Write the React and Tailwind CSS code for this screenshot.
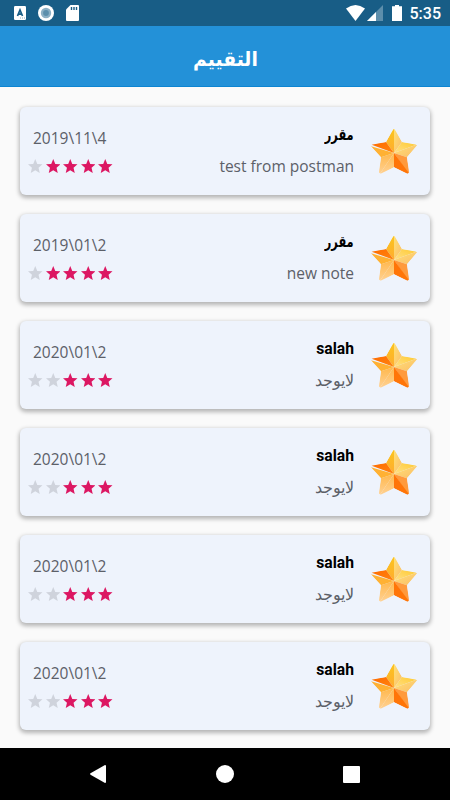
const reviews = [
  { name: 'مقرر', note: 'test from postman', date: '2019\\11\\4', rating: 4 },
  { name: 'مقرر', note: 'new note', date: '2019\\01\\2', rating: 4 },
  { name: 'salah', note: 'لايوجد', date: '2020\\01\\2', rating: 3 },
  { name: 'salah', note: 'لايوجد', date: '2020\\01\\2', rating: 3 },
  { name: 'salah', note: 'لايوجد', date: '2020\\01\\2', rating: 3 },
  { name: 'salah', note: 'لايوجد', date: '2020\\01\\2', rating: 3 },
];

const isArabic = (text) => /[\u0600-\u06ff]/.test(text);

function StatusBar() {
  return (
    <div className="flex h-[26px] shrink-0 items-center bg-[#185d86] pr-[9px] pl-[14px] text-white">
      <svg className="h-[14px] w-3" viewBox="0 0 12 14">
        <rect width="12" height="14" rx="1.2" fill="#fff" />
        <path d="M3.5 10 6 4l2.5 6M4.3 8.2h3.4" fill="none" stroke="#185d86" strokeWidth="1.7" />
        <path d="M6 12h1M8 12h1M10 12h1" stroke="#8cacc0" />
      </svg>
      <svg className="ml-3 size-4" viewBox="0 0 16 16">
        <circle cx="8" cy="8" r="8" fill="#fff" />
        <circle cx="8" cy="8" r="5.2" fill="#8cb0c5" />
        <circle cx="8" cy="8" r="2.9" fill="#5c8fac" />
      </svg>
      <svg className="ml-3 h-4 w-[13px]" viewBox="0 0 13 16">
        <path d="M4.5 0H12a1 1 0 0 1 1 1v14a1 1 0 0 1-1 1H1a1 1 0 0 1-1-1V4.5z" fill="#fff" />
        <path d="M5.5 2v3M8 2v3M10.5 2v3" stroke="#185d86" strokeWidth="1.4" />
      </svg>
      <svg className="ml-auto h-4 w-[19px]" viewBox="0 0 19 16">
        <path d="M0 3.6Q9.5-3.4 19 3.6L9.5 16z" fill="#fff" />
      </svg>
      <svg className="ml-[2px] h-4 w-4" viewBox="0 0 16 16">
        <path d="M16 0v16H0z" fill="#5d8eab" />
        <path d="M9 7v9H0z" fill="#fff" />
      </svg>
      <svg className="ml-[9px] h-4 w-[10px]" viewBox="0 0 10 16">
        <path d="M3 0h4v1.3h3V16H0V1.3h3z" fill="#fff" />
      </svg>
      <span className="ml-2 pt-[2px] font-['Roboto',sans-serif] text-[16px] leading-none font-medium">5:35</span>
    </div>
  );
}

function GoldStar() {
  return (
    <svg className="size-12 shrink-0" viewBox="0 0 48 48">
      <defs>
        <linearGradient id="crest" x1="0" y1="0" x2="0" y2="1">
          <stop stopColor="#fbc51d" />
          <stop offset="1" stopColor="#ffac30" />
        </linearGradient>
        <linearGradient id="pale" x1="0" y1="0" x2="1" y2="1">
          <stop stopColor="#ffe078" />
          <stop offset="1" stopColor="#fbbd66" />
        </linearGradient>
        <linearGradient id="side" x1="1" y1="0" x2="0" y2="1">
          <stop stopColor="#ffc92c" />
          <stop offset="1" stopColor="#ffe08a" />
        </linearGradient>
        <linearGradient id="orange" x1="0" y1="0" x2="1" y2="1">
          <stop stopColor="#ff6a00" />
          <stop offset="1" stopColor="#ff8510" />
        </linearGradient>
        <linearGradient id="foot" x1="0" y1="0" x2="0" y2="1">
          <stop stopColor="#ffb74b" />
          <stop offset="1" stopColor="#ffd49a" />
        </linearGradient>
        <clipPath id="outline">
          <path d="M22.5 2Q24 0 25.5 2L32 14 45.2 16.4Q48 17 46.2 19L37 29.2 39.3 43Q39 46.3 36.5 45.2L24 39.2 11.5 45.2Q9 46.3 8.7 43L11 29.2 1.8 19Q0 17 2.8 16.4L16 14Z" />
        </clipPath>
      </defs>
      <g clipPath="url(#outline)">
        <path d="M24 0 16 14 24 25z" fill="url(#crest)" />
        <path d="M24 0 32 14 24 25z" fill="url(#pale)" />
        <path d="M48 16 32 14 24 25z" fill="url(#side)" />
        <path d="M48 16 37 29.2 24 25z" fill="url(#pale)" />
        <path d="M39.5 48 37 29.2 24 25z" fill="#ff9a3c" />
        <path d="M41 48 24 39.2V25z" fill="#ff7508" />
        <path d="M8.5 48 24 39.2V25z" fill="url(#foot)" />
        <path d="M8.5 48 11 29.2 24 25z" fill="url(#foot)" />
        <path d="M0 16 16 14 24 25z" fill="url(#orange)" />
        <path d="M0 18 11 29.2 24 25z" fill="#ffb133" />
      </g>
    </svg>
  );
}

function Rating({ value }) {
  return (
    <div className="flex flex-row-reverse justify-end gap-[3px]">
      {[0, 1, 2, 3, 4].map((i) => (
        <svg key={i} className={i < value ? 'h-[14px] w-[14.5px] text-[#dc1762]' : 'h-[14px] w-[14.5px] text-[#cfd3dc]'} viewBox="2 2 20 19" fill="currentColor" preserveAspectRatio="none">
          <path d="M12 17.27 18.18 21l-1.64-7.03L22 9.24l-7.19-.61L12 2 9.19 8.63 2 9.24l5.46 4.73L5.82 21z" />
        </svg>
      ))}
    </div>
  );
}

function ReviewCard({ review }) {
  return (
    <article className="flex h-[88px] shrink-0 rounded-[6px] bg-[#eef3fc] pr-[12px] pl-[8px] shadow-[0_2px_4px_1px_rgba(0,0,0,0.28)]">
      <div className="flex flex-col pt-[19px]">
        <time className="ml-[5px] h-6 font-['Open_Sans',sans-serif] text-[15.5px] leading-6 font-normal text-[#5c6068]">{review.date}</time>
        <div className="mt-[9px]">
          <Rating value={review.rating} />
        </div>
      </div>
      <div className="ml-auto flex flex-col items-end pt-[16px]">
        <h2 dir="auto" className={isArabic(review.name)
          ? "h-6 origin-right scale-x-[0.71] font-['DejaVu_Sans',sans-serif] text-[16px] leading-6 font-extrabold text-black"
          : "h-6 font-['Roboto',sans-serif] text-[15.7px] leading-6 font-bold text-black"}>
          {review.name}
        </h2>
        <p dir="auto" className={isArabic(review.note)
          ? "mt-[8px] h-6 font-['DejaVu_Sans',sans-serif] text-[15.5px] leading-6 font-extralight text-[#5c6068]"
          : "mt-[7.5px] h-6 font-['Open_Sans',sans-serif] text-[15.5px] leading-6 font-normal text-[#5c6068]"}>
          {review.note}
        </p>
      </div>
      <div className="ml-4 pt-[21px]">
        <GoldStar />
      </div>
    </article>
  );
}

function NavBar() {
  return (
    <nav className="flex h-[52px] shrink-0 items-center justify-between bg-black pr-[90px] pl-[90px]">
      <svg className="h-[18px] w-4" viewBox="0 0 16 18" fill="#fff">
        <path d="M15 0q1 0 1 1v16q0 1-1 1L.5 9.7Q-.3 9 .5 8.3z" />
      </svg>
      <div className="size-[18px] rounded-full bg-white" />
      <div className="size-[17px] rounded-[1px] bg-white" />
    </nav>
  );
}

export default function App() {
  return (
    <div className="flex h-[800px] w-[450px] flex-col overflow-hidden bg-[#fafafa]">
      <StatusBar />
      <header className="flex h-[61px] shrink-0 items-center justify-center border-b border-[#0c85d2] bg-[#2391d8] pt-[5px]">
        <h1 dir="rtl" className="scale-x-[0.94] font-['DejaVu_Sans',sans-serif] text-[20px] leading-none font-bold whitespace-nowrap text-white">التقييم</h1>
      </header>
      <main className="flex min-h-0 flex-1 flex-col gap-[19.2px] overflow-hidden px-5 pt-[19.5px]">
        {reviews.map((review, i) => <ReviewCard key={i} review={review} />)}
      </main>
      <NavBar />
    </div>
  );
}
